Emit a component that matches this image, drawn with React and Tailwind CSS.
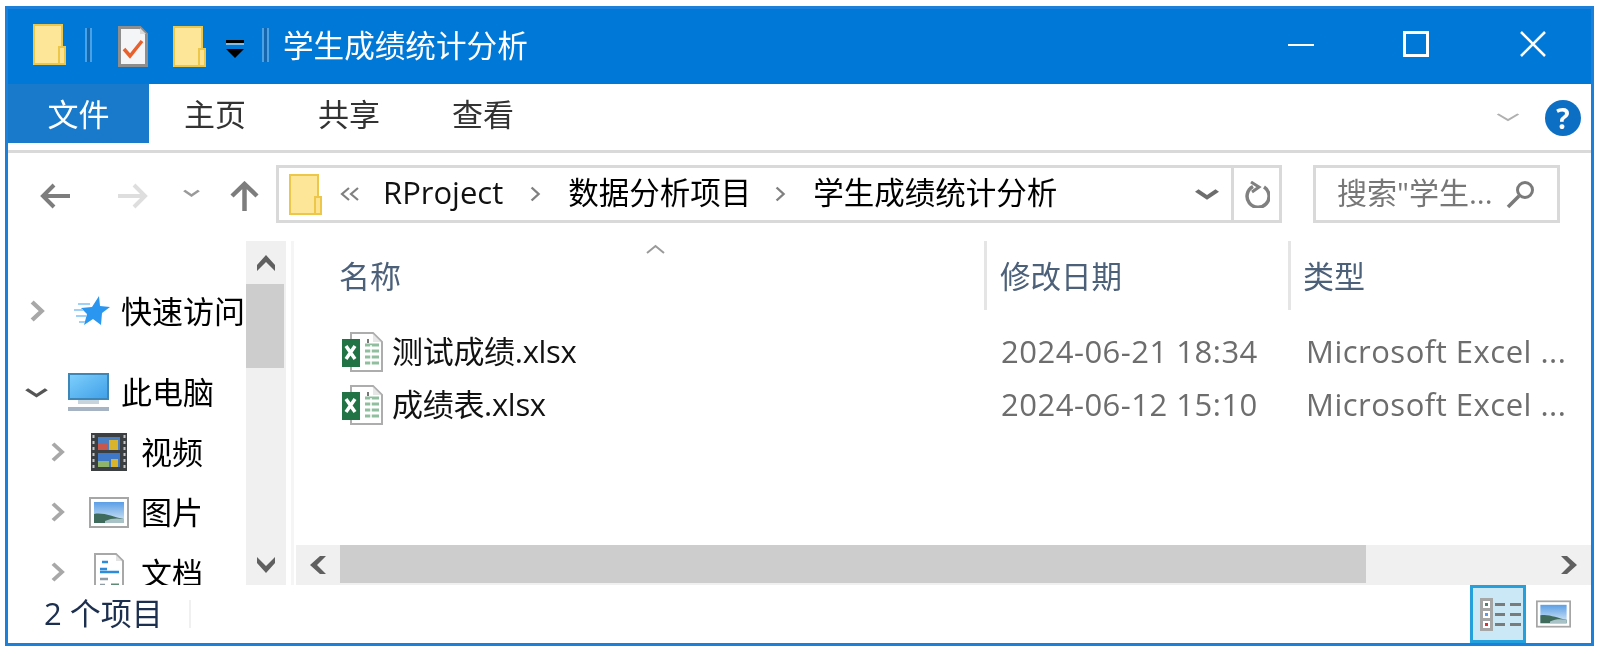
import React from "react";

const Folder = ({ className = "" }) => (
  <svg className={className} width="33" height="41" viewBox="0 0 33 41">
    <rect x="1" y="1" width="28" height="39" fill="#fee698" stroke="#ecc74a" strokeWidth="2" />
    <rect x="26" y="23" width="6" height="17" fill="#fde390" stroke="#ecc74a" strokeWidth="2" />
  </svg>
);

const Sep = ({ className = "" }) => (
  <svg className={className} width="7" height="34" viewBox="0 0 7 34">
    <rect x="0" y="0" width="2" height="34" fill="#4aa2e6" />
    <rect x="2" y="0" width="3" height="34" fill="#1666ad" />
    <rect x="5" y="0" width="2" height="34" fill="#4aa2e6" />
  </svg>
);

const CheckDoc = ({ className = "" }) => (
  <svg className={className} width="30" height="41" viewBox="0 0 30 41">
    <path d="M1.5 1.5H22L28.5 8V39.5H1.5Z" fill="#f4f5f6" stroke="#8e8e8e" strokeWidth="3" />
    <path d="M22 2V8H28Z" fill="#dcdcdc" />
    <path d="M6 23L12 30L24 15" fill="none" stroke="#e8602c" strokeWidth="3.5" />
  </svg>
);

const Chevron = ({ dir = "right", w = 14, h = 22, color = "#a8a8a8", sw = 4, className = "" }) => {
  const d = {
    right: "M2 2L11 11L2 20",
    left: "M12 2L3 11L12 20",
    down: "M1 4L7 10L13 4",
    up: "M1 10L7 4L13 10",
  }[dir];
  const vb = dir === "down" || dir === "up" ? "0 0 14 14" : "0 0 14 22";
  return (
    <svg className={className} width={w} height={h} viewBox={vb} preserveAspectRatio="none">
      <path d={d} fill="none" stroke={color} strokeWidth={sw} />
    </svg>
  );
};

const Arrow = ({ dir, color, className = "", w = 31, h = 26 }) => {
  const d = {
    left: "M30 13H3M14 2L3 13L14 24",
    right: "M1 13H28M17 2L28 13L17 24",
  }[dir];
  return (
    <svg className={className} width={w} height={h} viewBox="0 0 31 26">
      <path d={d} fill="none" stroke={color} strokeWidth="4" />
    </svg>
  );
};

const Star = ({ className = "" }) => (
  <svg className={className} width="37" height="30" viewBox="0 0 37 30">
    <path d="M26 0L27 10L37 11L29 17L28 29L20 23L11 29L14 18L8 12L19 11Z" fill="#2a96f0" />
    <path d="M5 8H17M1 14H10M3 20H13M6 26H12" stroke="#9fd0f7" strokeWidth="2" />
  </svg>
);

const Monitor = ({ className = "" }) => (
  <svg className={className} width="41" height="38" viewBox="0 0 41 38">
    <defs>
      <linearGradient id="mon" x1="0" y1="0" x2="1" y2="1">
        <stop offset="0" stopColor="#7fd0fc" />
        <stop offset="1" stopColor="#3f9fe8" />
      </linearGradient>
    </defs>
    <rect x="1" y="1" width="39" height="25" fill="url(#mon)" stroke="#3d86b5" strokeWidth="2" />
    <rect x="10" y="27" width="21" height="4" fill="#c7d3dd" />
    <rect x="0" y="34" width="41" height="4" fill="#a5b3c2" />
  </svg>
);

const Film = ({ className = "" }) => (
  <svg className={className} width="36" height="38" viewBox="0 0 36 38">
    <rect width="36" height="38" fill="#3c3f42" />
    <path d="M2.5 2V36M33.5 2V36" stroke="#c8c8c8" strokeWidth="2" strokeDasharray="3 3" />
    <rect x="7" y="4" width="22" height="13" fill="#4b7fc4" />
    <rect x="7" y="11" width="9" height="6" fill="#c9574c" />
    <rect x="18" y="7" width="9" height="10" fill="#d8b42c" />
    <rect x="7" y="20" width="22" height="14" fill="#3f78c6" />
    <rect x="7" y="28" width="11" height="6" fill="#8fb46a" />
    <rect x="20" y="26" width="7" height="8" fill="#d8b42c" />
  </svg>
);

const Picture = ({ className = "", w = 40, h = 31 }) => (
  <svg className={className} width={w} height={h} viewBox="0 0 40 31">
    <defs>
      <linearGradient id={`sky${w}`} x1="0" y1="0" x2="0" y2="1">
        <stop offset="0" stopColor="#5b9ee6" />
        <stop offset="1" stopColor="#dbeaf5" />
      </linearGradient>
    </defs>
    <rect x="1" y="1" width="38" height="29" fill="#fff" stroke="#a6a6a6" strokeWidth="2" />
    <rect x="5" y="5" width="30" height="21" fill={`url(#sky${w})`} />
    <path d="M5 17C14 15 24 20 35 22V26H5Z" fill="#3f6b5c" />
    <path d="M16 24C22 21 28 21 35 22V26H16Z" fill="#a9c2c8" />
  </svg>
);

const DocIcon = ({ className = "" }) => (
  <svg className={className} width="30" height="38" viewBox="0 0 30 38">
    <path d="M1 1H22L29 8V38H1Z" fill="#fff" stroke="#a8a8a8" strokeWidth="2" />
    <path d="M22 2V8H28" fill="#e3e3e3" />
    <path d="M6 16H13M8 9H14M6 19H25" stroke="#2d8bdc" strokeWidth="2.5" />
    <path d="M6 26H14M6 32H11" stroke="#8f9ca6" strokeWidth="2.5" />
    <path d="M17 32H25" stroke="#5f8a76" strokeWidth="3" />
  </svg>
);

const Excel = ({ className = "" }) => (
  <svg className={className} width="41" height="40" viewBox="0 0 41 40">
    <path d="M9 1H31L40 10V39H9Z" fill="#fff" stroke="#adadad" strokeWidth="2" />
    <path d="M31 2V10H39" fill="#e6e6e6" />
    <path d="M23 13H37M23 19H37M23 25H37M23 31H37" stroke="#8fbf9f" strokeWidth="3" />
    <path d="M29 13V33" stroke="#fff" strokeWidth="1.5" />
    <path d="M26 7V11" stroke="#777" strokeWidth="2" />
    <rect x="0" y="7" width="18" height="28" fill="#217346" />
    <path d="M4 14L13 27M13 14L4 27" stroke="#fff" strokeWidth="3.5" />
  </svg>
);

const ListView = ({ className = "" }) => (
  <svg className={className} width="41" height="33" viewBox="0 0 41 33">
    <rect width="13" height="33" fill="#a6a6a6" />
    <rect x="3" y="3" width="7" height="7" fill="#fff" />
    <rect x="3" y="13" width="7" height="7" fill="#fff" />
    <rect x="3" y="23" width="7" height="7" fill="#fff" />
    <rect x="5" y="5" width="3" height="3" fill="#54806f" />
    <rect x="5" y="15" width="3" height="3" fill="#5a9af0" />
    <rect x="5" y="25" width="3" height="3" fill="#e03030" />
    <path d="M15 6.5H25M30 6.5H41M15 16.5H25M30 16.5H41M15 26.5H25M30 26.5H41" stroke="#7b7b7b" strokeWidth="3" />
  </svg>
);

const Tab = ({ children }) => (
  <div className="w-[134px] h-[59px] pt-[2px] flex items-center justify-center text-[31px] leading-none text-[#333]">
    {children}
  </div>
);

const NavRow = ({ chevron, icon, label, labelClass }) => (
  <div className="h-[60px] flex items-center shrink-0">
    {chevron}
    {icon}
    <span className={`text-[31px] leading-none text-black whitespace-nowrap ${labelClass}`}>{label}</span>
  </div>
);

const FileRow = ({ name, date }) => (
  <div className="grid grid-cols-[688px_304px_1fr] h-[53px] items-center text-[31px] leading-none">
    <div className="flex items-center pl-[46px]">
      <Excel />
      <span className="ml-[9px] text-[#111] whitespace-nowrap tracking-[-0.3px]">{name}</span>
    </div>
    <div className="pl-[17px] text-[#6d6d6d] whitespace-nowrap tracking-[0.5px]">{date}</div>
    <div className="pl-[18px] text-[#6d6d6d] whitespace-nowrap tracking-[0.5px]">Microsoft Excel ...</div>
  </div>
);

export default function App() {
  return (
    <div className="w-[1599px] h-[652px] bg-white pt-[6px] px-[5px] font-['Open_Sans','Noto_Sans_CJK_SC',sans-serif] overflow-hidden blur-[0.6px]">
      <div className="h-[640px] border-[3px] border-[#1a80d9] flex flex-col bg-white">
        {/* title bar */}
        <div className="h-[75px] shrink-0 bg-[#0078d7] flex items-start">
          <Folder className="ml-[25px] mt-[15px]" />
          <Sep className="ml-[19px] mt-[19px]" />
          <CheckDoc className="ml-[26px] mt-[17px]" />
          <Folder className="ml-[25px] mt-[17px]" />
          <svg className="ml-[20px] mt-[31px]" width="18" height="18" viewBox="0 0 18 18">
            <rect width="18" height="3" fill="#000" />
            <rect y="3" width="18" height="2" fill="#7fbdee" />
            <path d="M0 9H18L9 18Z" fill="#000" />
          </svg>
          <Sep className="ml-[18px] mt-[19px]" />
          <span className="ml-[14px] mt-[21px] text-[30.6px] leading-none text-white whitespace-nowrap">学生成绩统计分析</span>
          <div className="flex-1" />
          <div className="w-[26px] h-[2px] bg-white mt-[35px]" />
          <div className="w-[26px] h-[26px] border-[3px] border-white ml-[89px] mt-[22px]" />
          <svg className="ml-[91px] mt-[22px] mr-[45px]" width="26" height="26" viewBox="0 0 26 26">
            <path d="M1 1L25 25M25 1L1 25" stroke="#fff" strokeWidth="2.5" />
          </svg>
        </div>

        {/* ribbon */}
        <div className="h-[69px] shrink-0 border-b-[3px] border-[#d9d9d9] flex items-start">
          <div className="w-[141px] h-[59px] pt-[1px] mr-[-1px] bg-[#1979ca] text-white flex items-center justify-center text-[31px] leading-none">文件</div>
          <Tab>主页</Tab>
          <Tab>共享</Tab>
          <Tab>查看</Tab>
          <div className="flex-1" />
          <Chevron dir="down" w={24} h={14} color="#b0b0b0" sw={1.6} className="mt-[26px]" />
          <div className="ml-[25px] mr-[10px] mt-[16px] w-[36px] h-[36px] rounded-full bg-[#0d6fc4] text-white flex items-center justify-center text-[28px] font-bold leading-none">?</div>
        </div>

        {/* address row */}
        <div className="h-[88px] shrink-0 flex items-start">
          <Arrow dir="left" color="#7d7d7d" className="ml-[32px] mt-[30px]" />
          <Arrow dir="right" color="#dedede" className="ml-[46px] mt-[30px]" />
          <Chevron dir="down" w={17} h={12} color="#9a9a9a" sw={2.5} className="ml-[35px] mt-[34px]" />
          <svg className="ml-[30px] mt-[28px]" width="29" height="30" viewBox="0 0 29 30">
            <path d="M14.5 30V3M2 15L14.5 3L27 15" fill="none" stroke="#7d7d7d" strokeWidth="4.5" />
          </svg>
          <div className="ml-[17px] mt-[12px] w-[1006px] h-[58px] border-[3px] border-[#d9d9d9] flex items-center">
            <div className="w-[952px] h-full flex items-center">
              <Folder className="ml-[10px]" />
              <svg className="ml-[18px]" width="20" height="14" viewBox="0 0 20 14">
                <path d="M9 1L2 7L9 13M18 1L11 7L18 13" fill="none" stroke="#808080" strokeWidth="2.2" />
              </svg>
              <span className="ml-[23px] mb-[4px] text-[31px] leading-none text-[#111]">RProject</span>
              <Chevron w={11} h={16} color="#808080" sw={3} className="ml-[27px]" />
              <span className="ml-[27px] mb-[4px] text-[30.5px] leading-none text-black whitespace-nowrap">数据分析项目</span>
              <Chevron w={11} h={16} color="#808080" sw={3} className="ml-[24px]" />
              <span className="ml-[27px] mb-[4px] text-[30.5px] leading-none text-black whitespace-nowrap">学生成绩统计分析</span>
              <div className="flex-1" />
              <Chevron dir="down" w={24} h={16} color="#6d6d6d" sw={3} className="mr-[12px]" />
            </div>
            <div className="w-[3px] h-full bg-[#d9d9d9]" />
            <div className="flex-1 flex items-center justify-center pt-[1px]">
              <svg width="26" height="27" viewBox="0 0 26 27">
                <path d="M9 5.5A11 11 0 1 0 20 6" fill="none" stroke="#808080" strokeWidth="3.5" />
                <path d="M7 1L15 6L8 11" fill="none" stroke="#808080" strokeWidth="3" />
              </svg>
            </div>
          </div>
          <div className="ml-[31px] mt-[12px] w-[247px] h-[58px] border-[3px] border-[#d9d9d9] flex items-center">
            <span className="ml-[21px] mb-[2px] text-[30px] leading-none text-[#777] whitespace-nowrap">搜索"学生...</span>
            <svg className="ml-[13px]" width="29" height="29" viewBox="0 0 29 29">
              <circle cx="19" cy="10" r="7.5" fill="none" stroke="#7a7a7a" strokeWidth="3" />
              <path d="M13 16L2 27" stroke="#7a7a7a" strokeWidth="3.5" />
            </svg>
          </div>
        </div>

        {/* middle */}
        <div className="h-[344px] shrink-0 flex">
          <div className="w-[238px] shrink-0 overflow-hidden flex flex-col pt-[40px]">
            <NavRow
              chevron={<Chevron className="ml-[22px]" w={15} h={22} />}
              icon={<Star className="ml-[28px]" />}
              label="快速访问"
              labelClass="ml-[11px]"
            />
            <div className="h-[21px] shrink-0" />
            <NavRow
              chevron={<Chevron dir="down" w={23} h={15} color="#555" sw={2.5} className="ml-[17px]" />}
              icon={<Monitor className="ml-[20px]" />}
              label="此电脑"
              labelClass="ml-[12px]"
            />
            <NavRow
              chevron={<Chevron className="ml-[43px]" w={14} h={20} />}
              icon={<Film className="ml-[26px]" />}
              label="视频"
              labelClass="ml-[14px]"
            />
            <NavRow
              chevron={<Chevron className="ml-[43px]" w={14} h={20} />}
              icon={<Picture className="ml-[24px]" />}
              label="图片"
              labelClass="ml-[12px]"
            />
            <NavRow
              chevron={<Chevron className="ml-[43px]" w={14} h={20} />}
              icon={<DocIcon className="ml-[29px]" />}
              label="文档"
              labelClass="ml-[17px] mt-[2px]"
            />
          </div>

          {/* nav scrollbar */}
          <div className="w-[40px] shrink-0 bg-[#f0f0f0] flex flex-col">
            <div className="h-[43px] shrink-0 flex items-center justify-center">
              <svg width="18" height="16" viewBox="0 0 18 16">
                <path d="M9 0L18 10V16L9 7L0 16V10Z" fill="#606060" />
              </svg>
            </div>
            <div className="w-[38px] h-[84px] shrink-0 bg-[#cdcdcd]" />
            <div className="flex-1" />
            <div className="h-[40px] shrink-0 flex items-center justify-center">
              <svg width="18" height="16" viewBox="0 0 18 16">
                <path d="M9 16L18 6V0L9 9L0 0V6Z" fill="#606060" />
              </svg>
            </div>
          </div>

          <div className="w-[3px] ml-[5px] shrink-0 bg-[#f5f5f5]" />

          {/* content */}
          <div className="flex-1 min-w-0 flex flex-col ml-[2px]">
            <div className="grid grid-cols-[688px_304px_1fr] h-[69px] shrink-0 relative text-[31px] leading-none text-[#4c607a]">
              <div className="pl-[43px] pt-[20px]">名称</div>
              <div className="border-l-[3px] border-[#e5e5e5] pl-[13px] pt-[20px] whitespace-nowrap text-[30.5px]">修改日期</div>
              <div className="border-l-[3px] border-[#e5e5e5] pl-[12px] pt-[20px]">类型</div>
              <svg className="absolute left-[350px] top-[3px]" width="19" height="11" viewBox="0 0 19 11">
                <path d="M1 9L9.5 2L18 9" fill="none" stroke="#9a9a9a" strokeWidth="2" />
              </svg>
            </div>
            <div className="h-[15px] shrink-0" />
            <FileRow name="测试成绩.xlsx" date="2024-06-21 18:34" />
            <FileRow name="成绩表.xlsx" date="2024-06-12 15:10" />
            <div className="flex-1" />
            <div className="h-[40px] shrink-0 bg-[#f0f0f0] flex items-start">
              <div className="w-[44px] h-[40px] flex items-center justify-center">
                <svg width="16" height="18" viewBox="0 0 16 18">
                  <path d="M0 9L10 0H16L7 9L16 18H10Z" fill="#606060" />
                </svg>
              </div>
              <div className="w-[1026px] h-[38px] bg-[#cdcdcd]" />
              <div className="flex-1" />
              <div className="w-[44px] h-[40px] flex items-center justify-center">
                <svg width="16" height="18" viewBox="0 0 16 18">
                  <path d="M16 9L6 0H0L9 9L0 18H6Z" fill="#606060" />
                </svg>
              </div>
            </div>
          </div>
        </div>

        {/* status bar */}
        <div className="flex-1 flex items-center">
          <span className="ml-[36px] mb-[2px] text-[31px] leading-none text-[#1c2f4f] whitespace-nowrap">2 个项目</span>
          <div className="ml-[26px] w-[2px] h-[28px] bg-[#f0f0f0]" />
          <div className="flex-1" />
          <div className="w-[56px] h-full border-[3px] border-[#26a0da] bg-[#cbe8f6] flex items-center justify-center pl-[5px]">
            <ListView />
          </div>
          <Picture className="ml-[10px] mr-[20px]" w={35} h={28} />
        </div>
      </div>
    </div>
  );
}
